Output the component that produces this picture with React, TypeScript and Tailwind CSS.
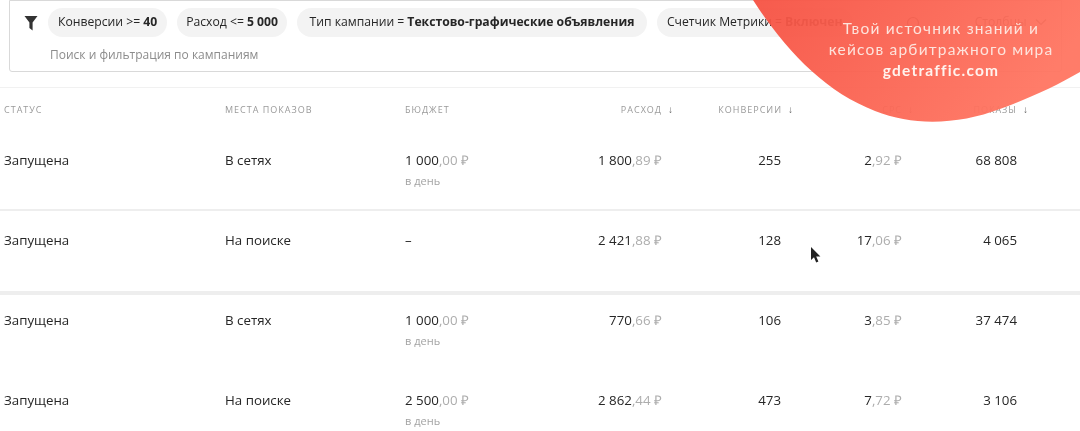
import React from "react";

const rows = [
  { place: "В сетях", budget: ["1 000", ",00 ₽"], day: true, spend: ["1 800", ",89 ₽"], conv: "255", cpc: ["2", ",92 ₽"], shows: "68 808", h: "h-[78px] pt-[20px]", line: "h-[2px] bg-[#eeeeee]" },
  { place: "На поиске", budget: null, day: false, spend: ["2 421", ",88 ₽"], conv: "128", cpc: ["17", ",06 ₽"], shows: "4 065", h: "h-[80px] pt-[20px]", line: "h-[4px] bg-[#eeeeee]" },
  { place: "В сетях", budget: ["1 000", ",00 ₽"], day: true, spend: ["770", ",66 ₽"], conv: "106", cpc: ["3", ",85 ₽"], shows: "37 474", h: "h-[80px] pt-[16px]", line: "" },
  { place: "На поиске", budget: ["2 500", ",00 ₽"], day: true, spend: ["2 862", ",44 ₽"], conv: "473", cpc: ["7", ",72 ₽"], shows: "3 106", h: "h-[56px] pt-[16px]", line: "" },
];

function Money({ v }: { v: string[] }) {
  return (
    <span>
      <span className="text-[#262626]">{v[0]}</span>
      <span className="text-[#adadad]">{v[1]}</span>
    </span>
  );
}

function Pill({ children, className = "px-[10px]" }: { children: React.ReactNode; className?: string }) {
  return (
    <div className={`h-[29px] shrink-0 rounded-full bg-[#f3f3f3] flex items-center text-[12.2px] text-[#262626] whitespace-nowrap ${className}`}>
      {children}
    </div>
  );
}

function Head({ children, arrow, className = "" }: { children: React.ReactNode; arrow?: boolean; className?: string }) {
  return (
    <div className={`text-[9px] font-medium tracking-[1px] text-[#9a9a9a] whitespace-nowrap ${className}`}>
      {children}
      {arrow && <span className="ml-[6px] text-[10px] text-[#666]">↓</span>}
    </div>
  );
}

const cols = "pl-[4px] grid grid-cols-[221px_180px_137px_120px_119px_121px_115px]";

export default function App() {
  return (
    <div className="relative w-[1080px] h-[431px] overflow-hidden bg-white blur-[0.4px]" style={{ fontFamily: '"Open Sans", "Liberation Sans", sans-serif' }}>
      <div className="ml-[9px] w-[1053px] h-[72px] border border-[#d9d9d9] rounded-b-[3px] flex flex-col">
        <div className="flex items-center h-[29px] mt-[7px] gap-[10px] overflow-hidden">
          <svg className="ml-[14px] shrink-0" width="14" height="16" viewBox="0 0 14 16">
            <path d="M0.5 1h13L8.6 7.6V15.5L5.4 13V7.6z" fill="#333" />
          </svg>
          <Pill>Конверсии &gt;= <b className="ml-[3px]">40</b></Pill>
          <Pill className="px-[9px]">Расход &lt;= <b className="ml-[3px]">5 000</b></Pill>
          <Pill className="px-[12.5px]">Тип кампании = <b className="ml-[3px]">Текстово-графические объявления</b></Pill>
          <Pill>Счетчик Метрики = <b className="ml-[3px]">Включен</b></Pill>
          <svg className="ml-[43px] shrink-0" width="14" height="14" viewBox="0 0 14 14" fill="none" stroke="#555" strokeWidth="1.2">
            <circle cx="7" cy="7" r="5.5" />
          </svg>
          <div className="ml-[45px] shrink-0 flex items-center gap-[8px] text-[12.2px] text-[#444]">
            Столбцы
            <svg width="12" height="8" viewBox="0 0 12 8" fill="none" stroke="#555" strokeWidth="1.2"><path d="M1 1.5l5 5 5-5" /></svg>
          </div>
        </div>
        <div className="ml-[40px] mt-[10px] text-[12px] leading-[16px] text-[#8c8c8c]">Поиск и фильтрация по кампаниям</div>
      </div>
      <div className="mt-[15px] h-px bg-[#f1f1f1]" />
      <div className={`${cols} h-[43px] items-center`}>
        <Head>СТАТУС</Head>
        <Head>МЕСТА ПОКАЗОВ</Head>
        <Head>БЮДЖЕТ</Head>
        <Head arrow className="text-right mr-[-12px]">РАСХОД</Head>
        <Head arrow className="text-right mr-[-13px]">КОНВЕРСИИ</Head>
        <Head arrow className="text-right mr-[-12px]">CPC</Head>
        <Head arrow className="text-right mr-[-12px]">ПОКАЗЫ</Head>
      </div>
      {rows.map((r, i) => (
        <div key={i}>
          <div className={`${cols} ${r.h} text-[13.3px] leading-[18px] text-[#262626]`}>
            <div>Запущена</div>
            <div>{r.place}</div>
            <div>
              {r.budget ? <Money v={r.budget} /> : "–"}
              {r.day && <div className="text-[11px] leading-[14px] mt-[5px] text-[#a3a3a3]">в день</div>}
            </div>
            <div className="text-right"><Money v={r.spend} /></div>
            <div className="text-right">{r.conv}</div>
            <div className="text-right"><Money v={r.cpc} /></div>
            <div className="text-right">{r.shows}</div>
          </div>
          {r.line && <div className={r.line} />}
        </div>
      ))}
      <svg className="absolute left-0 top-0" width="1080" height="130" viewBox="0 0 1080 130">
        <defs>
          <linearGradient id="g" x1="0" y1="0" x2="1" y2="0.3">
            <stop offset="0" stopColor="#f65243" />
            <stop offset="1" stopColor="#ff7561" />
          </linearGradient>
        </defs>
        <path d="M753 0C785 50 825 92 875 111C915 127 960 124 1000 109C1030 98 1056 86 1080 72V0Z" fill="url(#g)" fillOpacity="0.95" />
      </svg>
      <div className="absolute left-[820px] top-[18px] w-[242px] text-center text-[15.5px] leading-[21px] tracking-[1.2px] text-[#fde3dc] whitespace-nowrap" style={{ fontFamily: 'Lato, sans-serif' }}>
        <div>Твой источник знаний и</div>
        <div>кейсов арбитражного мира</div>
        <div className="font-bold text-[#fff3ee]">gdetraffic.com</div>
      </div>
      <svg className="absolute left-[810px] top-[246px]" width="12" height="18" viewBox="0 0 12 18">
        <path d="M1 1V14L4 11.2L6.2 16.4L8.4 15.4L6.2 10.5H10.4Z" fill="#222" />
      </svg>
    </div>
  );
}
